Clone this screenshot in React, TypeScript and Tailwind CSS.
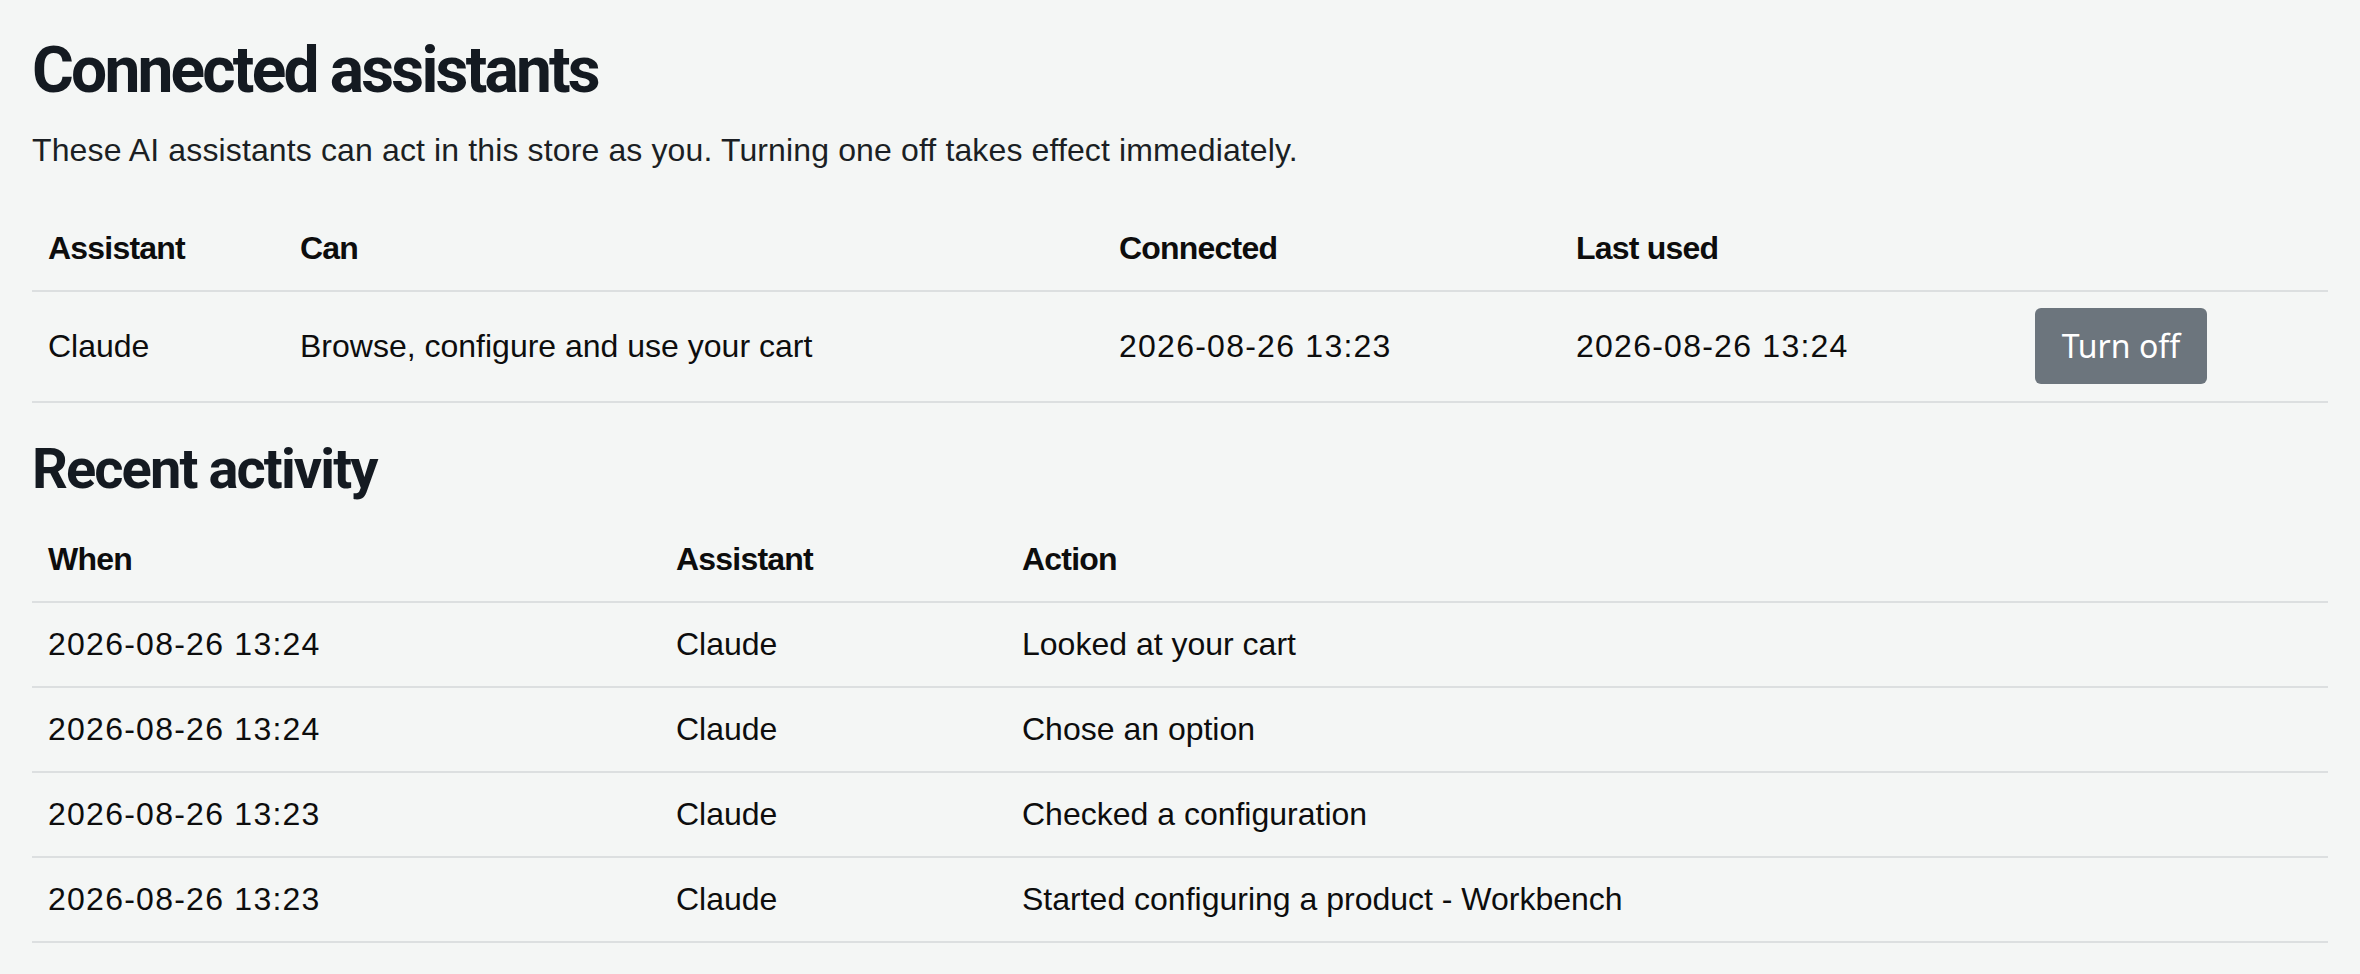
const assistants = [
  {
    name: "Claude",
    can: "Browse, configure and use your cart",
    connected: "2026-08-26 13:23",
    lastUsed: "2026-08-26 13:24",
  },
];

const activity = [
  { when: "2026-08-26 13:24", who: "Claude", action: "Looked at your cart" },
  { when: "2026-08-26 13:24", who: "Claude", action: "Chose an option" },
  { when: "2026-08-26 13:23", who: "Claude", action: "Checked a configuration" },
  {
    when: "2026-08-26 13:23",
    who: "Claude",
    action: "Started configuring a product - Workbench",
  },
];

const connectedCols = "grid grid-cols-[252px_819px_457px_459px_1fr] items-center border-b-2 border-[#dcdfe0]";
const activityCols = "grid grid-cols-[628px_346px_1fr] items-center border-b-2 border-[#dcdfe0]";

export default function App() {
  return (
    <div className="min-h-screen bg-[#f4f6f5] px-[32px] pt-[33px] font-['Liberation_Sans',Arial,sans-serif] text-[32px] text-[#0d0d0d]">
      <h1 className="font-['Roboto',sans-serif] font-bold text-[64px] leading-[1.2] tracking-[-2.8px] text-[#141a21]">
        Connected assistants
      </h1>
      <p className="mt-[16px] leading-[48px] tracking-[0.13px] text-[#1b1f24]">
        These AI assistants can act in this store as you. Turning one off takes effect immediately.
      </p>

      <div className="mt-[33px] w-full">
        <div className={`${connectedCols} py-[17.5px] font-bold leading-[48px] tracking-[-0.8px]`}>
          <div className="px-[16px]">Assistant</div>
          <div className="px-[16px]">Can</div>
          <div className="px-[16px]">Connected</div>
          <div className="px-[16px]">Last used</div>
          <div className="px-[16px]"></div>
        </div>
        {assistants.map((a) => (
          <div key={a.name} className={`${connectedCols} pt-[16px] pb-[17px] leading-[48px]`}>
            <div className="px-[16px]">{a.name}</div>
            <div className="px-[16px]">{a.can}</div>
            <div className="px-[16px] tracking-[1.25px]">{a.connected}</div>
            <div className="px-[16px] tracking-[1.25px]">{a.lastUsed}</div>
            <div className="px-[16px]">
              <button
                type="button"
                className="flex h-[76px] w-[172px] items-center justify-center rounded-[6px] bg-[#6c757d] font-['Noto_Sans',sans-serif] text-[32px] text-white"
              >
                Turn off
              </button>
            </div>
          </div>
        ))}
      </div>

      <h2 className="mt-[33px] font-['Roboto',sans-serif] font-bold text-[56px] leading-[1.2] tracking-[-1.9px] text-[#141a21]">
        Recent activity
      </h2>

      <div className="mt-[15px] w-full">
        <div className={`${activityCols} py-[17.5px] font-bold leading-[48px] tracking-[-0.8px]`}>
          <div className="px-[16px]">When</div>
          <div className="px-[16px]">Assistant</div>
          <div className="px-[16px]">Action</div>
        </div>
        {activity.map((row, i) => (
          <div key={i} className={`${activityCols} py-[17.5px] leading-[48px]`}>
            <div className="px-[16px] tracking-[1.25px]">{row.when}</div>
            <div className="px-[16px]">{row.who}</div>
            <div className="px-[16px]">{row.action}</div>
          </div>
        ))}
      </div>
    </div>
  );
}
